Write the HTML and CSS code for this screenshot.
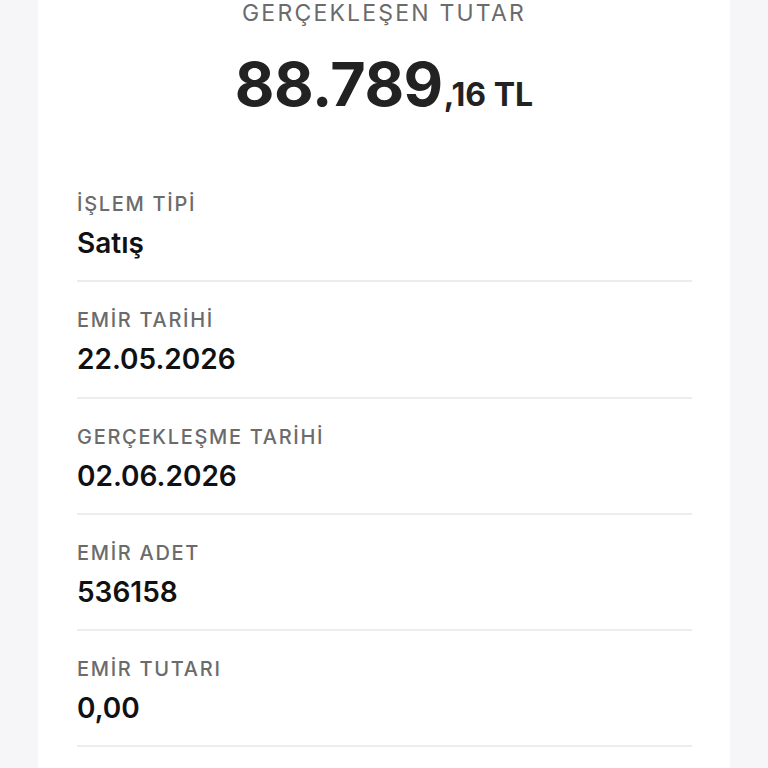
FILE: index.html
```html
<!DOCTYPE html>
<html lang="tr">
<head>
<meta charset="utf-8">
<link rel="stylesheet" href="styles.css">
</head>
<body>
<div class="card">
  <div class="summary">
    <div class="summary-title">GERÇEKLEŞEN TUTAR</div>
    <div class="amount"><span class="amount-int">88.789</span><span class="amount-dec">,16 TL</span></div>
  </div>
  <div class="rows">
    <div class="row">
      <div class="label">İŞLEM TİPİ</div>
      <div class="value">Satış</div>
    </div>
    <div class="row">
      <div class="label">EMİR TARİHİ</div>
      <div class="value">22.05.2026</div>
    </div>
    <div class="row">
      <div class="label">GERÇEKLEŞME TARİHİ</div>
      <div class="value">02.06.2026</div>
    </div>
    <div class="row">
      <div class="label">EMİR ADET</div>
      <div class="value">536158</div>
    </div>
    <div class="row">
      <div class="label">EMİR TUTARI</div>
      <div class="value">0,00</div>
    </div>
  </div>
</div>
</body>
</html>
```

FILE: styles.css
```css
html, body {
  margin: 0;
  padding: 0;
  background: #f6f6f8;
  height: 768px;
  overflow: hidden;
}
body {
  font-family: "Inter", "Noto Sans", sans-serif;
  color: #1a1a1a;
}
.card {
  margin: 0 38px;
  background: #ffffff;
  min-height: 768px;
}
.summary {
  display: flex;
  flex-direction: column;
  align-items: center;
}
.summary-title {
  font-size: 23px;
  line-height: 26px;
  color: #6b6b6b;
  font-weight: 400;
  letter-spacing: 2.2px;
}
.amount {
  margin-top: 28px;
  display: flex;
  align-items: baseline;
  color: #222222;
  font-weight: 700;
}
.amount-int {
  font-size: 61px;
  line-height: 61px;
  letter-spacing: -0.5px;
}
.amount-dec {
  font-size: 32px;
  line-height: 40px;
  font-weight: 700;
  margin-left: 1px;
}
.rows {
  margin-top: 51px;
  padding: 0 38px 0 39px;
}
.row {
  padding: 26px 0 20.25px;
  border-bottom: 2px solid #ececec;
}
.row:first-child {
  padding-top: 26px;
}
.label {
  font-size: 20px;
  line-height: 24px;
  color: #6b6b6b;
  font-weight: 500;
  letter-spacing: 1.7px;
}
.value {
  margin-top: 10px;
  font-size: 28px;
  line-height: 34px;
  color: #111111;
  font-weight: 600;
}
```
